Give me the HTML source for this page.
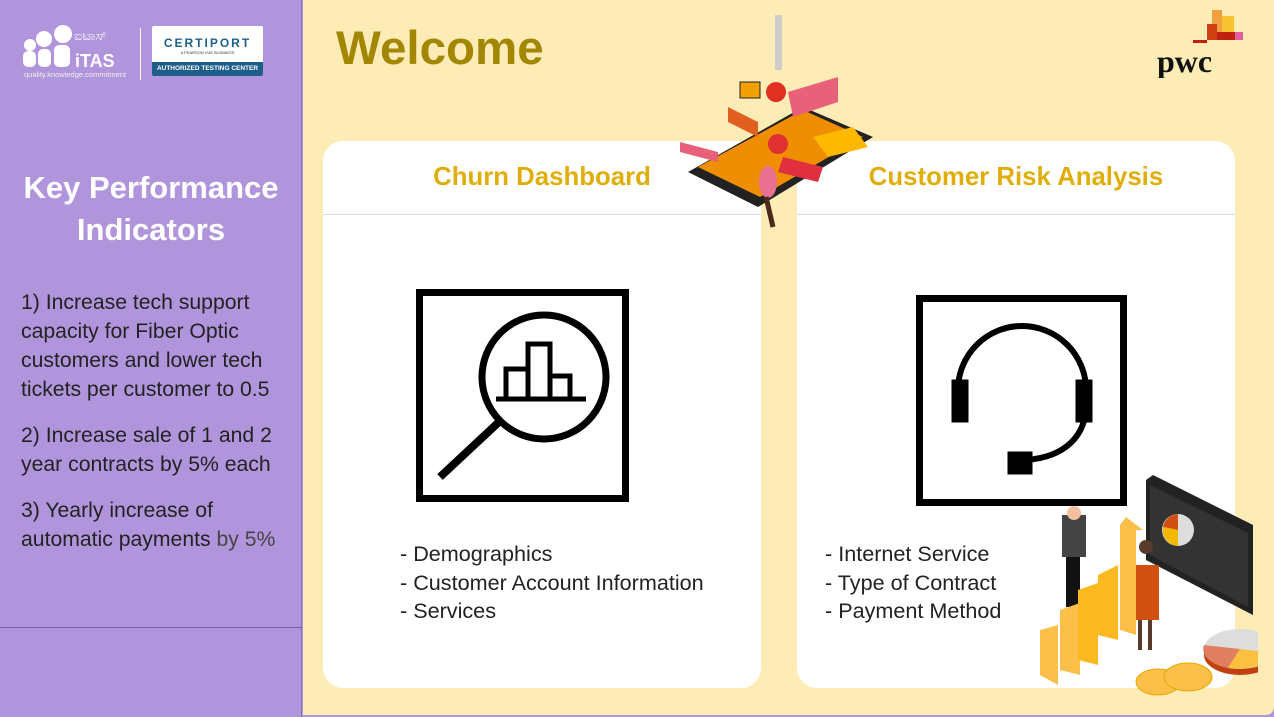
<!DOCTYPE html>
<html><head><meta charset="utf-8"><style>
*{margin:0;padding:0;box-sizing:border-box}
body{width:1274px;height:717px;overflow:hidden;background:#b195dc;font-family:"Segoe UI","Liberation Sans",sans-serif;position:relative}
.side{position:absolute;left:0;top:0;width:302px;height:717px;background:#b195dc;border-right:1px solid #8a6fb8}
.main{position:absolute;left:303px;top:0;width:971px;height:715px;background:#feecb7;border-bottom-right-radius:8px}
.card{position:absolute;top:141px;width:438px;height:547px;background:#fff;border-radius:20px}
.card h2{position:absolute;top:22px;left:0;right:0;text-align:center;color:#e0ae0a;font-size:25.8px;font-weight:bold}
.card .hr{position:absolute;top:73px;left:0;right:0;height:1px;background:#ddd}
.list{position:absolute;font-size:21.6px;color:#222;line-height:28.5px}
</style></head><body>
<div class="side">
 <svg style="position:absolute;left:22px;top:25px" width="110" height="55">
  <circle cx="8" cy="20" r="6" fill="#fff"/><circle cx="22" cy="14" r="8" fill="#fff"/><circle cx="41" cy="9" r="9" fill="#fff"/>
  <rect x="1" y="26" width="13" height="16" rx="5" fill="#fff"/><rect x="16" y="24" width="13" height="18" rx="5" fill="#fff"/><rect x="32" y="20" width="16" height="22" rx="5" fill="#fff"/>
  <text x="52" y="15" fill="#fff" font-size="13" font-family="Liberation Sans">ಐಟಾಸ್</text>
  <text x="53" y="42" fill="#fff" font-size="18" font-weight="bold" font-family="Liberation Sans">iTAS</text>
  <text x="2" y="52" fill="#eee" font-size="7.5" font-family="Liberation Sans">quality.knowledge.commitment</text>
 </svg>
 <div style="position:absolute;left:140px;top:28px;width:1px;height:52px;background:#fff"></div>
 <div style="position:absolute;left:152px;top:26px;width:111px;height:50px;background:#fff;border-radius:2px;overflow:hidden">
  <div style="text-align:center;color:#1d5f8a;font-size:12px;font-weight:bold;letter-spacing:2px;margin-top:10px;font-family:'Liberation Sans'">CERTIPORT</div>
  <div style="text-align:center;font-size:4px;color:#333">A PEARSON VUE BUSINESS</div>
  <div style="position:absolute;bottom:0;left:0;right:0;height:14px;background:#1d5f8a;color:#fff;font-size:6.5px;font-weight:bold;text-align:center;line-height:14px;font-family:'Liberation Sans';white-space:nowrap">AUTHORIZED TESTING CENTER</div>
 </div>
 <div style="position:absolute;left:0;width:302px;top:167px;text-align:center;color:#fff;font-size:31px;font-weight:bold;line-height:42px">Key Performance<br>Indicators</div>
 <div style="position:absolute;left:21px;top:288px;width:280px;color:#222;font-size:21.2px;line-height:29px">
  <p>1) Increase tech support capacity for Fiber Optic customers and lower tech tickets per customer to 0.5</p>
  <p style="margin-top:17px">2) Increase sale of 1 and 2 year contracts by 5% each</p>
  <p style="margin-top:17px">3) Yearly increase of automatic payments <span style="color:#444">by 5%</span></p>
 </div>
 <div style="position:absolute;left:0;top:627px;width:302px;height:1px;background:#7a5fa8"></div>
</div>
<div class="main">
 <div style="position:absolute;left:33px;top:21px;font-size:47.5px;font-weight:bold;color:#a38703">Welcome</div>
 <svg style="position:absolute;left:852px;top:8px" width="90" height="70">
  <rect x="57" y="2" width="10" height="30" fill="#f0a040"/><rect x="67" y="8" width="12" height="24" fill="#f5c430"/><rect x="52" y="16" width="10" height="16" fill="#d04010"/><rect x="62" y="24" width="22" height="8" fill="#c02010"/><rect x="80" y="24" width="8" height="8" fill="#e060a0"/><rect x="38" y="32" width="14" height="3" fill="#c02010"/>
  <text x="2" y="64" font-size="32" font-weight="bold" font-family="Liberation Serif" fill="#111">pwc</text>
 </svg>
 <div class="card" style="left:20px"><h2>Churn Dashboard</h2><div class="hr"></div>
  <svg style="position:absolute;left:93px;top:148px" width="213" height="213" fill="none" stroke="#000" stroke-width="7">
   <rect x="3.5" y="3.5" width="206" height="206"/>
   <circle cx="128" cy="88" r="62"/><line x1="84" y1="132" x2="24" y2="188" stroke-width="8"/>
   <rect x="90" y="80" width="22" height="30" stroke-width="5"/><rect x="112" y="55" width="22" height="55" stroke-width="5"/><rect x="134" y="87" width="20" height="23" stroke-width="5"/><line x1="80" y1="110" x2="170" y2="110" stroke-width="5"/>
  </svg>
  <div class="list" style="left:77px;top:399px">- Demographics<br>- Customer Account Information<br>- Services</div>
 </div>
 <div class="card" style="left:494px"><h2>Customer Risk Analysis</h2><div class="hr"></div>
  <svg style="position:absolute;left:119px;top:154px" width="212" height="212" fill="none" stroke="#000">
   <rect x="3.5" y="3.5" width="204" height="204" stroke-width="7"/>
   <path d="M42 95 A64 64 0 0 1 170 95 V110 M170 110 C170 140 150 162 110 165" stroke-width="6"/>
   <rect x="36" y="85" width="16" height="42" fill="#000"/><rect x="160" y="85" width="16" height="42" fill="#000"/><rect x="92" y="157" width="24" height="22" fill="#000"/>
  </svg>
  <div class="list" style="left:28px;top:399px">- Internet Service<br>- Type of Contract<br>- Payment Method</div>
 </div>
 <svg style="position:absolute;left:375px;top:12px" width="200" height="225">
  <rect x="97" y="3" width="7" height="55" fill="#ccc"/>
  <polygon points="10,160 125,95 195,125 80,195" fill="#222"/>
  <polygon points="20,155 125,98 185,125 82,185" fill="#ee8e00"/>
  <circle cx="98" cy="80" r="10" fill="#e03020"/><rect x="62" y="70" width="20" height="16" fill="#f0a000" stroke="#222"/>
  <polygon points="110,80 160,65 160,90 115,105" fill="#e8607a"/>
  <polygon points="50,95 80,110 80,125 50,110" fill="#e06020"/>
  <polygon points="135,125 175,115 190,135 150,145" fill="#ffb800"/>
  <circle cx="100" cy="132" r="10" fill="#e03030"/>
  <polygon points="2,130 40,140 40,150 2,140" fill="#e8607a"/>
  <polygon points="105,145 145,155 140,170 100,160" fill="#e03040"/>
  <ellipse cx="90" cy="170" rx="9" ry="16" fill="#e87090"/><path d="M88 185 L95 215" stroke="#4a2a1a" stroke-width="5"/>
 </svg>
 <svg style="position:absolute;left:735px;top:475px" width="220" height="230">
  <polygon points="108,5 115,0 215,50 215,140 108,85" fill="#222"/><polygon points="112,10 210,58 210,132 112,80" fill="#333"/>
  <circle cx="140" cy="55" r="16" fill="#ddd"/><path d="M140 55 L140 39 A16 16 0 0 0 125 52Z" fill="#d05010"/><path d="M140 55 L125 52 A16 16 0 0 0 140 71Z" fill="#f5b800"/>
  <rect x="24" y="40" width="24" height="42" fill="#444"/><circle cx="36" cy="38" r="7" fill="#f3c0a0"/><rect x="28" y="82" width="14" height="50" fill="#111"/>
  <rect x="95" y="90" width="26" height="55" fill="#d05010"/><circle cx="108" cy="72" r="7" fill="#5a3a2a"/><rect x="100" y="145" width="4" height="30" fill="#5a3a2a"/><rect x="110" y="145" width="4" height="30" fill="#5a3a2a"/>
  <polygon points="2,155 20,150 20,210 2,200" fill="#fcc04a"/><polygon points="22,135 42,128 42,200 22,195" fill="#fcc04a"/><polygon points="40,115 60,108 60,190 40,185" fill="#fcba20"/><polygon points="60,100 80,90 80,165 60,160" fill="#fcba20"/><polygon points="82,50 88,42 105,55 98,55 98,160 82,155" fill="#fcc04a"/>
  <ellipse cx="120" cy="207" rx="22" ry="13" fill="#fcc04a" stroke="#e8a800"/><ellipse cx="150" cy="202" rx="24" ry="14" fill="#fcc04a" stroke="#e8a800"/>
  <ellipse cx="202" cy="180" rx="36" ry="20" fill="#c04010"/><ellipse cx="202" cy="174" rx="36" ry="20" fill="#ddd"/><path d="M202 174 L166 170 A36 20 0 0 0 190 193Z" fill="#e08060"/><path d="M202 174 L190 193 A36 20 0 0 0 236 178Z" fill="#fcc040"/>
 </svg>
</div>
</body></html>
